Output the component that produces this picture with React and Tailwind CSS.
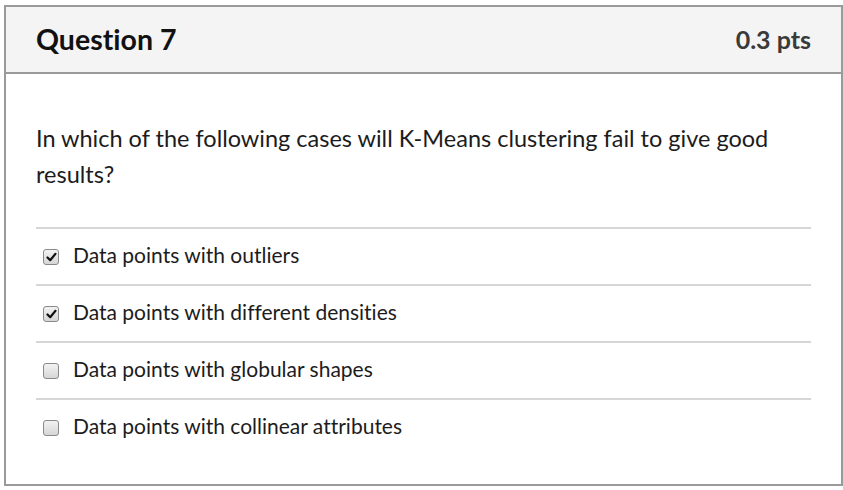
import React from "react";

const options = [
  { label: "Data points with outliers", checked: true },
  { label: "Data points with different densities", checked: true },
  { label: "Data points with globular shapes", checked: false },
  { label: "Data points with collinear attributes", checked: false },
];

function Box({ checked }) {
  return (
    <div className="w-[16px] h-[16px] rounded-[3px] border border-[#8a8a8a] bg-gradient-to-b from-[#f2f2f2] to-[#d6d6d6] flex items-center justify-center shrink-0">
      {checked && (
        <svg width="11" height="10" viewBox="0 0 11 10">
          <path d="M1.5 5.5 L4.2 8.2 L9.5 1.8" fill="none" stroke="#111" strokeWidth="2.2" strokeLinecap="round" strokeLinejoin="round" />
        </svg>
      )}
    </div>
  );
}

export default function App() {
  return (
    <div className="w-[843px] h-[490px] bg-white pt-[5px] pl-[4px] [font-variant-ligatures:none]" style={{ fontFamily: "Lato, 'Liberation Sans', sans-serif" }}>
      <div className="w-[839px] h-[481px] border-2 border-[#9a9a9a] flex flex-col">
        <div className="h-[67px] bg-[#f4f4f4] border-b-2 border-[#9a9a9a] flex items-center justify-between px-[30px] shrink-0">
          <div className="text-[28.5px] font-bold text-[#111] leading-none">Question 7</div>
          <div className="text-[25px] font-bold text-[#3a3a3a] leading-none">0.3 pts</div>
        </div>
        <div className="px-[30px] pt-[46px]">
          <p className="text-[23.5px] leading-[36px] text-[#1c1c1c] pr-[20px]">
            In which of the following cases will K-Means clustering fail to give good results?
          </p>
          <div className="mt-[35px]">
            {options.map((o, i) => (
              <div key={i} className="h-[57px] border-t-2 border-[#d6d6d6] flex items-center pl-[7px] gap-[14px]">
                <Box checked={o.checked} />
                <span className="text-[21px] leading-[24px] text-[#1c1c1c] -mt-[4px]">{o.label}</span>
              </div>
            ))}
          </div>
        </div>
      </div>
    </div>
  );
}
